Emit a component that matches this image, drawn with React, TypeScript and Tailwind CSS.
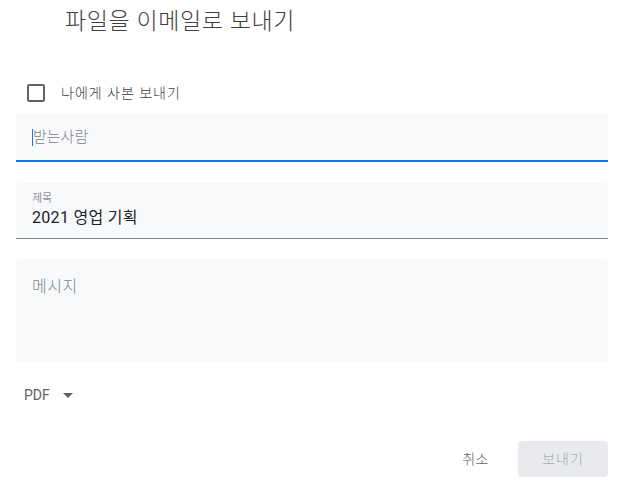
export default function App() {
  return (
    <div
      className="w-[620px] h-[483px] bg-white overflow-hidden text-[#202124]"
      style={{ fontFamily: "Roboto, 'Noto Sans CJK KR', sans-serif" }}
    >
      <h1 className="pl-[65px] pt-[6px] h-[70px] text-[23px] leading-[32px] font-light text-[#3c4043] tracking-[0.6px]">
        파일을 이메일로 보내기
      </h1>

      <div className="pl-4 pr-3">
        <label className="flex items-center h-[44px] pl-[11px] pt-[2px]">
          <span className="w-[18px] h-[18px] rounded-[2px] border-2 border-[#5f6368]" />
          <span className="ml-[16px] text-[14px] font-light tracking-[1px] text-[#3c4043]">나에게 사본 보내기</span>
        </label>

        <div className="h-[48px] rounded-t bg-[#f8f9fa] border-b-2 border-[#1a73e8] flex items-center pl-[16px] pt-[1px]">
          <span className="w-px h-[17px] bg-[#1a73e8]" />
          <span className="text-[15px] font-light text-[#80868b]">받는사람</span>
        </div>

        <div className="mt-[21px] h-[56px] rounded-t bg-[#f8f9fa] border-b border-[#80868b] pl-[16px] pt-[8px]">
          <div className="text-[11px] leading-[16px] font-light text-[#5f6368]">제목</div>
          <div className="text-[16px] leading-[22px] text-[#202124] tracking-[0.3px]">2021 영업 기획</div>
        </div>

        <div className="mt-[20px] h-[103px] rounded bg-[#f8f9fa] pl-[16px] pt-[16px]">
          <div className="text-[16px] leading-[24px] font-light text-[#80868b] tracking-[0.5px]">메시지</div>
        </div>

        <div className="mt-[22px] flex items-center h-[22px] pl-[8px]">
          <span className="text-[14px] text-[#5f6368]">PDF</span>
          <svg className="ml-[13px]" width="10" height="5" viewBox="0 0 10 5">
            <path d="M0 0 L10 0 L5 5 Z" fill="#5f6368" />
          </svg>
        </div>

        <div className="mt-[35px] flex justify-end items-center">
          <button className="h-[36px] px-[8px] mr-[21px] text-[14px] font-light text-[#5f6368] tracking-[0.5px]">취소</button>
          <button className="w-[90px] h-[36px] rounded bg-[#e8eaed] text-[14px] font-light text-[#a7abaf] tracking-[1px]">보내기</button>
        </div>
      </div>
    </div>
  );
}
